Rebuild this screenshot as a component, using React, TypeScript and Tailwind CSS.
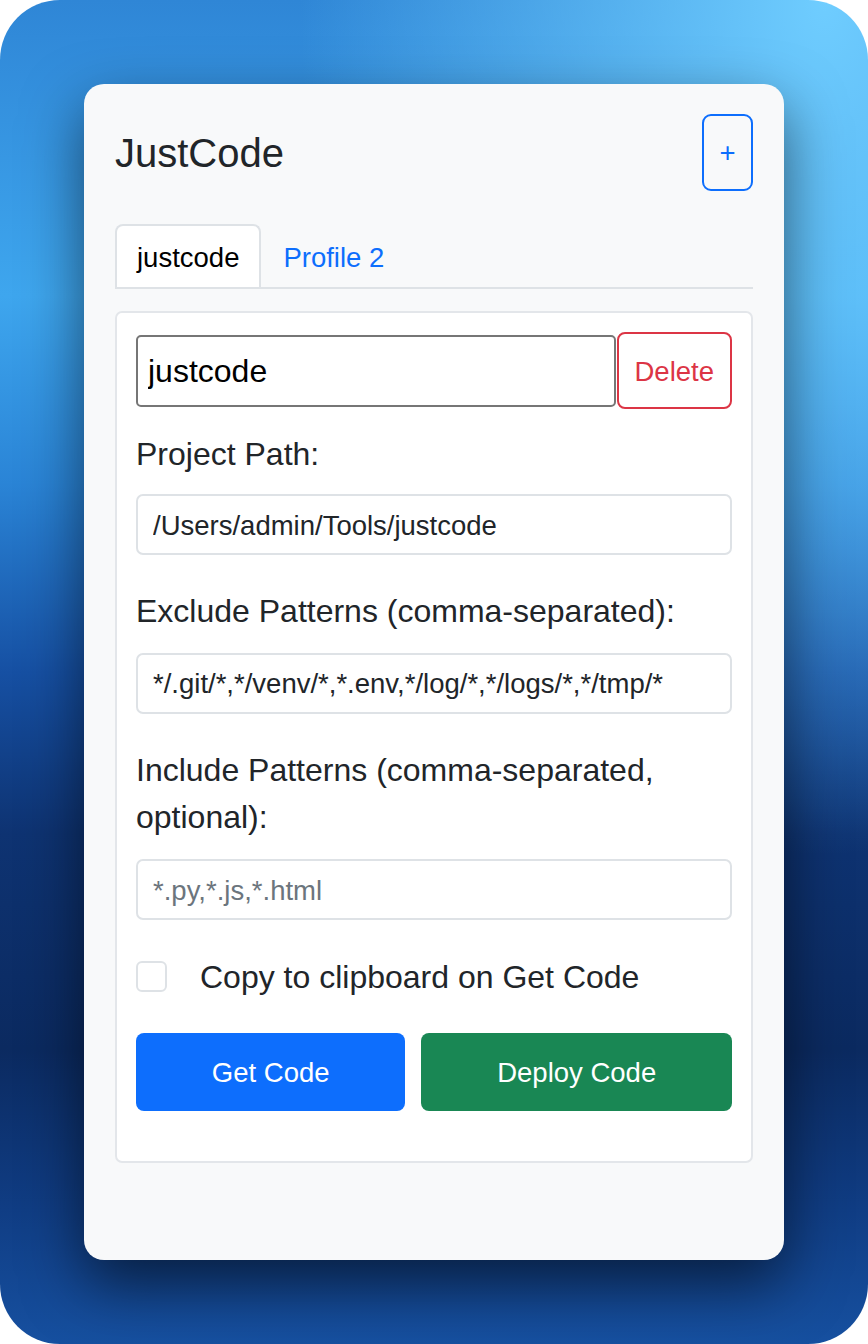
import { useState } from "react";

const font = "font-['Liberation_Sans',Arial,Helvetica,sans-serif]";

function Field({
  label,
  value,
  placeholder,
  labelClass,
  inputClass,
}: {
  label: string;
  value?: string;
  placeholder?: string;
  labelClass: string;
  inputClass: string;
}) {
  return (
    <>
      <label className={`block text-[32px] leading-[47.25px] text-[#212529] ${labelClass}`}>
        {label}
      </label>
      <input
        type="text"
        defaultValue={value}
        placeholder={placeholder}
        className={`block h-[61px] w-full rounded-[7px] border-2 border-[#dee2e6] bg-white px-[15px] text-[27.5px] text-[#212529] outline-none placeholder:text-[#6c757d] ${inputClass}`}
      />
    </>
  );
}

export default function App() {
  const [active, setActive] = useState(0);
  const [copy, setCopy] = useState(false);

  return (
    <div className={`bg-white ${font}`}>
      <div className="h-[1344px] w-[868px] overflow-hidden rounded-[60px] bg-[radial-gradient(ellipse_at_95%_0%,#6fcdff_0%,rgba(111,205,255,0)_45%),linear-gradient(180deg,#2f86d6_0%,#3ea6ee_22%,#2a84d6_36%,#1650a3_50%,#0e3372_62%,#0b2a60_78%,#103d84_90%,#1650a0_100%)] pt-[84px]">
        {/* Card */}
        <div className="mx-auto w-[700px] rounded-[20px] bg-[#f8f9fa] px-[31px] pb-[97px] pt-[30px] shadow-[0_24px_60px_rgba(0,0,0,0.55)]">
          {/* Header */}
          <div className="flex h-[77px] items-center justify-between">
            <h1 className="text-[40px] leading-[1.2] text-[#212529]">JustCode</h1>
            <button className="flex h-[77px] w-[51px] items-center justify-center rounded-[9px] border-2 border-[#0d6efd] text-[27.5px] text-[#0d6efd]">
              +
            </button>
          </div>

          {/* Tabs */}
          <div className="mt-[33px] flex border-b-2 border-[#dee2e6]">
            {["justcode", "Profile 2"].map((name, i) => (
              <button
                key={name}
                onClick={() => setActive(i)}
                className={`flex h-[63px] items-center rounded-t-[8px] border-2 border-b-0 px-[20px] pt-[2px] text-[27.5px] leading-[1.5] ${
                  active === i
                    ? "border-[#dee2e6] bg-white text-black"
                    : "border-transparent text-[#0d6efd]"
                }`}
              >
                {name}
              </button>
            ))}
          </div>

          {/* Panel */}
          <div className="mt-[22px] rounded-[7px] border-2 border-[#e3e6ea] bg-white p-[19px]">
            <div className="flex h-[77px] items-center">
              <input
                type="text"
                defaultValue="justcode"
                className="h-[72px] min-w-0 flex-1 rounded-[5px] border-2 border-[#767676] bg-white px-[10px] pt-[2px] text-[32px] text-black outline-none"
              />
              <button className="ml-[1px] h-[77px] rounded-[8px] border-2 border-[#dc3545] px-[16px] pt-[2px] text-[27.5px] text-[#dc3545]">
                Delete
              </button>
            </div>

            <Field
              label="Project Path:"
              value="/Users/admin/Tools/justcode"
              labelClass="mt-[22px]"
              inputClass="mt-[16px] pt-[2px]"
            />
            <Field
              label="Exclude Patterns (comma-separated):"
              value="*/.git/*,*/venv/*,*.env,*/log/*,*/logs/*,*/tmp/*"
              labelClass="mt-[33px]"
              inputClass="mt-[17px] pt-[2px]"
            />
            <Field
              label="Include Patterns (comma-separated, optional):"
              placeholder="*.py,*.js,*.html"
              labelClass="mt-[33px] pr-[60px]"
              inputClass="mt-[18px] pt-[2px]"
            />

            <label className="mt-[33px] flex h-[47px] items-center gap-[33px]">
              <input
                type="checkbox"
                checked={copy}
                onChange={(e) => setCopy(e.target.checked)}
                className="h-[31px] w-[31px] shrink-0 appearance-none rounded-[6px] border-2 border-[#dee2e6] bg-white checked:border-[#0d6efd] checked:bg-[#0d6efd]"
              />
              <span className="pt-[2px] text-[32px] leading-[47.25px] text-[#212529]">
                Copy to clipboard on Get Code
              </span>
            </label>

            <div className="mb-[31.5px] mt-[33px] flex gap-[16px]">
              <button className="h-[77.5px] flex-auto rounded-[8px] bg-[#0d6efd] px-[20px] pt-[2px] text-[27.5px] text-white">
                Get Code
              </button>
              <button className="h-[77.5px] flex-auto rounded-[8px] bg-[#198754] px-[20px] pt-[2px] text-[27.5px] text-white">
                Deploy Code
              </button>
            </div>
          </div>
        </div>
      </div>
    </div>
  );
}
